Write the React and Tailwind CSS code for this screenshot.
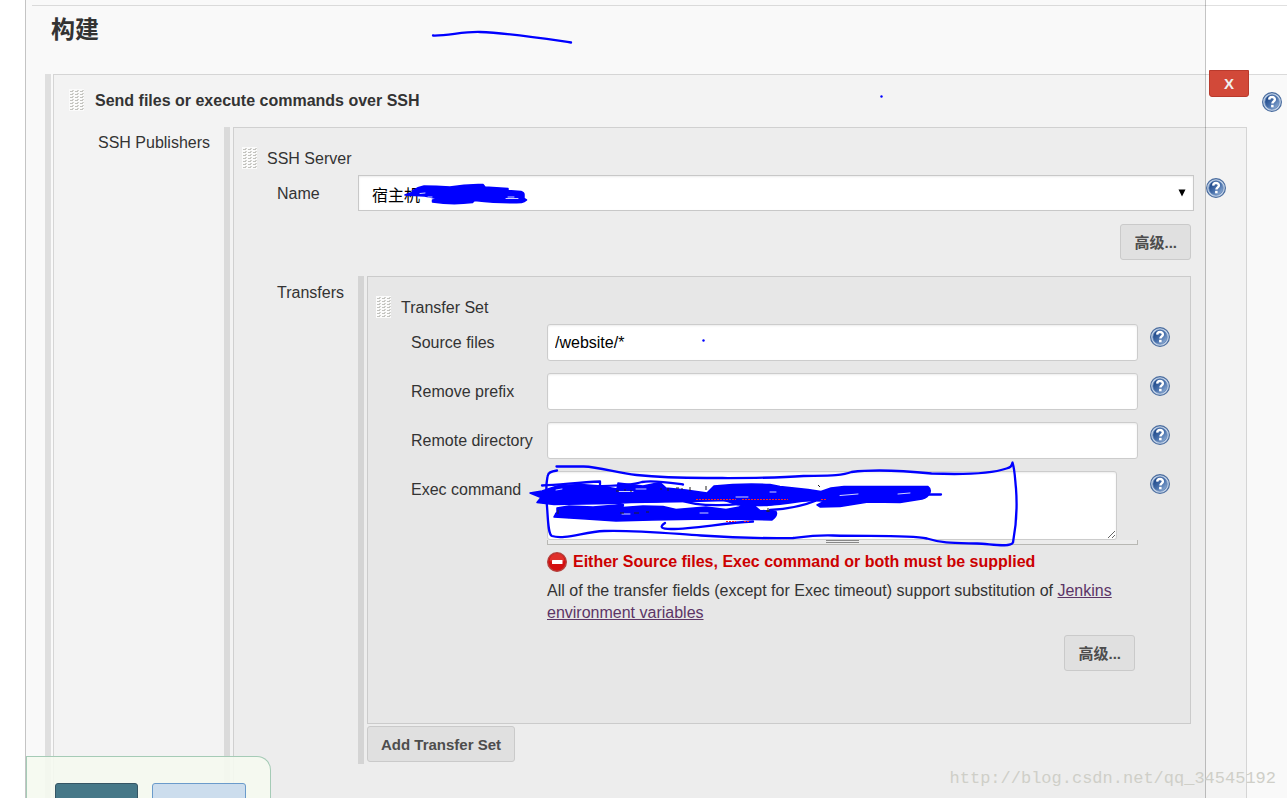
import { useId } from 'react'

const HelpIcon = () => {
  const id = useId()
  return (
    <button type="button" aria-label="Help" className="block h-5 w-5 shrink-0">
      <svg viewBox="0 0 20 20" className="block h-5 w-5">
        <defs>
          <linearGradient id={id} x1="0" y1="0" x2="1" y2="1">
            <stop offset="0.15" stopColor="#1d4788" />
            <stop offset="0.55" stopColor="#4a72ad" />
            <stop offset="1" stopColor="#a5c0e0" />
          </linearGradient>
        </defs>
        <circle cx="10" cy="10" r="9.4" fill="#c3d3e8" stroke="#4b6d9f" strokeWidth="1.2" />
        <circle cx="10" cy="10" r="7.2" fill={`url(#${id})`} stroke="#5f83b6" strokeWidth="0.8" />
        <path
          d="M7.2 7.6C7.3 5.9 8.4 5 10 5c1.7 0 2.9 1 2.9 2.4 0 1.9-2.5 2-2.5 4.1"
          fill="none"
          stroke="#fff"
          strokeWidth="2.4"
        />
        <rect x="9.1" y="12.8" width="2.5" height="2.5" fill="#fff" />
      </svg>
    </button>
  )
}

const ErrorIcon = () => (
  <svg viewBox="0 0 20 20" className="block h-5 w-5 shrink-0">
    <circle cx="10" cy="10" r="9.3" fill="#d40f10" stroke="#b5403c" strokeWidth="1.4" />
    <path d="M2.5 9a7.5 7.5 0 0 1 15 0c-4 1.5-11 1.5-15 0z" fill="#e0302b" />
    <rect x="5" y="8" width="10.5" height="4" rx="0.5" fill="#fff" />
  </svg>
)

const Grip = () => {
  const id = useId()
  return (
    <svg width="15" height="22" className="block shrink-0 cursor-move">
      <defs>
        <pattern id={id} x="1" y="1" width="5" height="3" patternUnits="userSpaceOnUse">
          <path d="M0 1.5h3" stroke="#c2c2be" strokeWidth="1" />
          <path d="M2 0.5h2" stroke="#d2d2ce" strokeWidth="1" />
        </pattern>
      </defs>
      <rect width="15" height="22" fill="#fbfbfb" />
      <rect x="1" y="1" width="14" height="20" fill={`url(#${id})`} />
    </svg>
  )
}

// Nested, slightly darker box with the grey drag bar on its left
const RepeatBox = ({ children, className = '', gap = 'gap-[3px]', footer }) => (
  <div className={`flex min-w-0 flex-1 ${gap} ${className}`}>
    <div className="w-[6px] shrink-0 bg-black/10" />
    <div className="flex min-w-0 flex-1 flex-col">
      {children}
      {footer}
    </div>
  </div>
)

const BoxTitle = ({ children }) => (
  <div className="flex h-[22px] items-start gap-[10px] pl-2">
    <Grip />
    <span>{children}</span>
  </div>
)

const Field = ({ label, htmlFor, labelWidth, children }) => (
  <div className="flex pl-[43px] pr-5">
    <label htmlFor={htmlFor} className={`${labelWidth} shrink-0 pt-[7px]`}>
      {label}
    </label>
    <div className="min-w-0 flex-1">{children}</div>
    <div className="ml-3 mt-[3px]">
      <HelpIcon />
    </div>
  </div>
)

const Button = ({ children }) => (
  <button
    type="button"
    className="h-9 rounded-[3px] border border-[#cacaca] bg-[#e0e0e0] px-[13px] pt-[2px] text-[15px] font-bold text-[#4d4d4d]"
  >
    {children}
  </button>
)

const inputClass =
  'block w-full rounded-[3px] border border-[#ccc] bg-white px-[7px] text-base text-black shadow-[inset_0_1px_2px_rgba(0,0,0,0.08)] outline-none'

const TextField = ({ id, label, value = '' }) => (
  <Field label={label} htmlFor={id} labelWidth="w-[136px]">
    <input id={id} type="text" defaultValue={value} className={`${inputClass} h-[37px]`} />
  </Field>
)

const TransferSet = () => (
  <div className="border border-black/[0.12] bg-black/[0.023] pb-[52px] pt-[19px]">
    <BoxTitle>Transfer Set</BoxTitle>
    <div className="mt-[6px] flex flex-col gap-3">
      <TextField id="source-files" label="Source files" value="/website/*" />
      <TextField id="remove-prefix" label="Remove prefix" />
      <TextField id="remote-directory" label="Remote directory" />
      <Field label="Exec command" htmlFor="exec-command" labelWidth="w-[136px]">
        <div className="pr-[21px]">
          <textarea id="exec-command" className={`${inputClass} h-[69px] py-[6px]`} />
        </div>
        <div className="flex h-[5px] flex-col items-center gap-px border-x border-b border-[#b8b8b4] bg-[#ececec]">
          <div className="h-px w-[33px] bg-[#888]" />
          <div className="h-px w-[33px] bg-[#888]" />
        </div>
        <div className="mt-[7px] flex items-center gap-[6px] font-bold leading-5 text-[#c00]">
          <ErrorIcon />
          <span>Either Source files, Exec command or both must be supplied</span>
        </div>
        <p className="mt-2 leading-[22px]">
          All of the transfer fields (except for Exec timeout) support substitution of{' '}
          <a href="#env" className="text-[#5c3566] underline">
            Jenkins environment variables
          </a>
        </p>
        <div className="mt-[11px] flex justify-end pr-[3px]">
          <Button>高级...</Button>
        </div>
      </Field>
    </div>
  </div>
)

const SshServer = () => (
  <div className="flex-1 border border-b-0 border-black/[0.12] bg-black/[0.023] pb-[34px] pt-[19px]">
    <BoxTitle>SSH Server</BoxTitle>
    <div className="mt-[6px]">
      <Field label="Name" htmlFor="server-name" labelWidth="w-[81px]">
        <div className="relative">
          <select
            id="server-name"
            className="block h-9 w-full appearance-none border border-[#c8c8c8] bg-white px-[13px] pt-[5px] text-base text-black shadow-[inset_0_1px_2px_rgba(0,0,0,0.08)]"
          >
            <option>宿主机</option>
          </select>
          <svg
            viewBox="0 0 8 8"
            className="pointer-events-none absolute right-2 top-[14px] h-2 w-2"
          >
            <path d="M0.5 0.5h7L4 7.5z" fill="#000" />
          </svg>
        </div>
        <div className="mt-[13px] flex justify-end pr-[3px]">
          <Button>高级...</Button>
        </div>
      </Field>
    </div>
    <div className="mt-4 flex pl-[43px] pr-[55px]">
      <div className="w-[81px] shrink-0 pt-[5px]">Transfers</div>
      <RepeatBox
        footer={
          <div className="py-[2px]">
            <Button>Add Transfer Set</Button>
          </div>
        }
      >
        <TransferSet />
      </RepeatBox>
    </div>
  </div>
)

const BuildStep = () => (
  <div className="relative flex flex-1 flex-col border-l border-t border-black/[0.12] bg-black/[0.023] pt-[14px]">
    <button
      type="button"
      className="absolute -top-[5px] right-[38px] h-[27px] w-10 rounded-b-[3px] border border-[#b93a2c] bg-[#d24939] text-[15px] font-bold text-[#f0f0f0]"
    >
      X
    </button>
    <div className="flex h-[22px] items-start gap-[11px] pl-[15px] pr-[5px]">
      <Grip />
      <span className="flex-1 font-bold">Send files or execute commands over SSH</span>
      <div className="pt-[3px]">
        <HelpIcon />
      </div>
    </div>
    <div className="mt-4 flex flex-1 pl-11 pr-10">
      <div className="w-[126px] shrink-0 pt-1">SSH Publishers</div>
      <RepeatBox>
        <SshServer />
      </RepeatBox>
    </div>
  </div>
)

// Sticky bar with the save and apply buttons, cut off by the window edge
const BottomBar = () => (
  <div className="absolute bottom-0 left-[26px] flex h-[42px] w-[245px] gap-[14px] overflow-hidden rounded-tr-[14px] border border-b-0 border-[#a5cbb6] bg-[#f5f9f0]/90 pl-7 pt-[26px]">
    <button
      type="button"
      aria-label="保存"
      className="h-9 w-[83px] shrink-0 rounded-[3px] border border-[#355564] bg-[#467888]"
    />
    <button
      type="button"
      aria-label="应用"
      className="h-9 w-[94px] shrink-0 rounded-[3px] border border-[#6a9bcb] bg-[#ccdded]"
    />
  </div>
)

// Freehand blue ink over the form
const Ink = () => (
  <svg
    width="1287"
    height="798"
    className="pointer-events-none absolute left-0 top-0"
    fill="none"
    stroke="#00f"
    strokeWidth="2.3"
    strokeLinecap="round"
    strokeLinejoin="round"
  >
    <path d="M433 35.5C448 36 462 31.500 480 32c28 1 60 6 91 10.500" />
    <g fill="#00f" stroke="none">
      <circle cx="881.5" cy="96.5" r="1.2" />
      <circle cx="703.5" cy="340.5" r="1.2" />
    </g>

    <g fill="#00f" strokeWidth="1.5">
      <path d="M405 195q6-3 13-3l-6-1q6-4 12-5 12 0 26 1 16-3 33-2.500l2 2.500 23 1.500v2l13 1q3 1 3 3v4l2.500 1.500q-2 2-5 2.500-19 1-47-2l-2 2q-20 2.500-40-.5v-2l6-1q-8-2-14-3z" />
      <path d="M530 493l12-2 9-3 8-2.500 22-1 20 1.500 16 3 1-6 25 3 17-3.500 6 5.500 20 2 21 3 7-7q28-3 56-1.500l10 2 28 3 13 2 10-3.500 13-1.500h84q3 2 2 6-2 5-8 6.500l-22 3.500-32-.5-28 4.500-20 .5-3-2 8-4-30-.5-28 5-30-1-10-4-36 1-60 1-20 1-57 1-17-2 4-5z" />
      <path d="M557 508l12-2 24 1 30-2.500v3l20-1.500 20 .5 13 3 30-2.500 20 2.500 27-5 7 6 16 1q2 4-4 8.500l-20-.5-46-.5-54 1-36 1-30-2-32-2 3-5z" />
    </g>

    <path d="M542 485.5c20-1 36-3 58-4v3M556 488c25-3 70 0 86-6 12-2 30 1 41 2.500" />
    <path d="M895 490l30-1M905 494.5h36M545 498c24 6 56-1 78 7M556 514l12 3" />
    <path d="M640 499c-6 4 30 3 60-2 40 1 20 9 60 8 30 0 45-6 60-6M770 510c16-1 30-3 45-9" />
    <path d="M680 500c20 8 60 5 70 2s-14 2-10 8" />
    <path d="M665 523c-6 4-4 6 6 6 25 0 50-6 82-7.500" />
    <path d="M557 470.5c-6 1-9 2-9.500 6-2 10-1.500 20-.5 30 1 12 1 28 5 29.500 12 4 32-4 52-5 30-1 60 2 97 4.500 30 2 60 3 92 2.500 16-2 22-3 40-2.500 38 1 76-.5 94 3 16 5 26 4.500 50 5 14 .5 33 4.500 36-1 3-16 4.500-34 3-54-1-9-1-18-3.500-26-1 4-2 5-6 6-18 6-50 6-75 5-30-3-60-4-80-1.500-10 4-26 3.500-48 4-30 2.500-60 2-97 2-26 0-46-.5-70-3-20-2-36-8-53-8.500h-27" />

    {/* thin gaps left between the strokes */}
    <g stroke="#cdd2ff" strokeWidth="1">
      <path d="M506 198.5h12M508 197h6M420 193.5l5-.5M428 197h4" />
      <path d="M619 491.5h14M636 489h10M770 492h6M840 495.5l18-1.500M898 494l12-1M736 497h12M622 514h8M700 513h8M556 490l6-1" />
    </g>
    <g stroke="#f22" strokeWidth="1" strokeDasharray="2 1" strokeLinecap="butt">
      <path d="M696 499.5h40M742 499.5h46M726 521.5h10M744 521.5h5M821 499.5h5" />
    </g>
    <g stroke="#222" strokeWidth="1" strokeLinecap="butt">
      <path d="M616 491h3M624 490h2M630 491h2M660 489h2M668 488v3M676 488h3M682 488v2M690 487v4M706 486v4M818 485l2 2" />
      <path d="M558 510v4M620 513h4M634 513h5M646 512h3M768 508v4M766 511h4" />
    </g>
  </svg>
)

export default function App() {
  return (
    <div className="relative flex min-h-screen overflow-hidden bg-white font-['Liberation_Sans','Noto_Sans_CJK_SC',sans-serif] text-base leading-6 text-[#333]">
      <main className="ml-[25px] mr-[81px] flex min-w-0 flex-1 flex-col border-x border-[#c4c4c4] bg-[#f9f9f9]">
        <div className="-mr-[82px] flex flex-1 flex-col pt-[5px]">
          <div className="ml-[6px] h-px bg-black/[0.12]" />
          <h1 className="mb-7 ml-[25px] mt-2 text-2xl font-bold leading-8">构建</h1>
          <RepeatBox className="ml-[19px]" gap="gap-[2px]">
            <BuildStep />
          </RepeatBox>
        </div>
      </main>
      <BottomBar />
      <div className="pointer-events-none absolute bottom-[7px] right-[11px] font-['Liberation_Mono',monospace] text-[17px] text-[#cfcfc8]">
        http://blog.csdn.net/qq_34545192
      </div>
      <Ink />
    </div>
  )
}
